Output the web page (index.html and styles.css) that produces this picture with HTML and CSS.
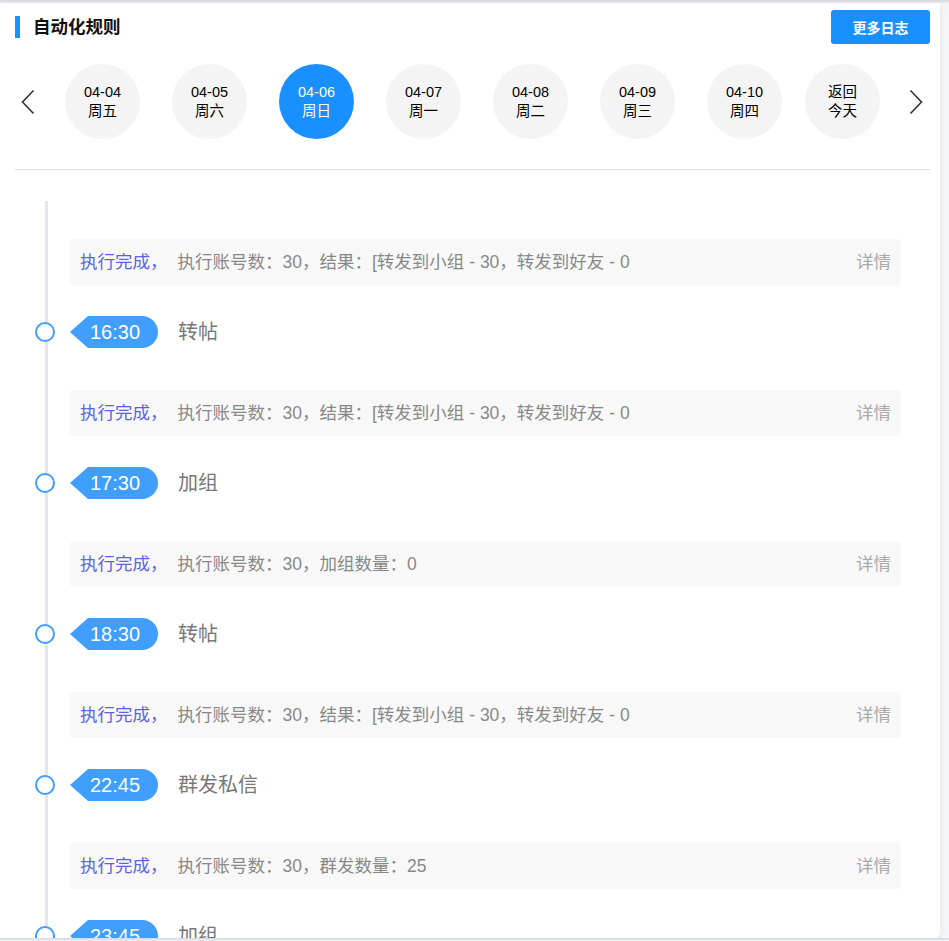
FILE: index.html
```html
<!DOCTYPE html>
<html lang="zh">
<head>
<meta charset="UTF-8">
<meta name="viewport" content="width=device-width, initial-scale=1.0">
<title>自动化规则</title>
<link rel="stylesheet" href="styles.css">
</head>
<body>
    <div class="panel">
        <div class="panel-header">
            <h2 class="panel-title">自动化规则</h2>
            <button type="button" class="btn-log">更多日志</button>
        </div>

        <div class="date-nav">
            <span class="arrow arrow-left">
                <svg width="14" height="26" viewBox="0 0 14 26"><path d="M12.5 1.5 L1.5 13 L12.5 24.5" fill="none" stroke="#333" stroke-width="1.6"/></svg>
            </span>
            <div class="days">
                <div class="day"><span>04-04</span><span>周五</span></div>
                <div class="day"><span>04-05</span><span>周六</span></div>
                <div class="day active"><span>04-06</span><span>周日</span></div>
                <div class="day"><span>04-07</span><span>周一</span></div>
                <div class="day"><span>04-08</span><span>周二</span></div>
                <div class="day"><span>04-09</span><span>周三</span></div>
                <div class="day"><span>04-10</span><span>周四</span></div>
            </div>
            <div class="day today"><span>返回</span><span>今天</span></div>
            <span class="arrow arrow-right">
                <svg width="14" height="26" viewBox="0 0 14 26"><path d="M1.5 1.5 L12.5 13 L1.5 24.5" fill="none" stroke="#333" stroke-width="1.6"/></svg>
            </span>
        </div>

        <div class="timeline">
            <div class="log">
                <span class="log-status">执行完成，</span>
                <span class="log-text">执行账号数：30，结果：[转发到小组 - 30，转发到好友 - 0</span>
                <a class="log-more">详情</a>
            </div>
            <div class="node">
                <span class="dot"></span>
                <span class="time">16:30</span>
                <span class="task">转帖</span>
            </div>

            <div class="log">
                <span class="log-status">执行完成，</span>
                <span class="log-text">执行账号数：30，结果：[转发到小组 - 30，转发到好友 - 0</span>
                <a class="log-more">详情</a>
            </div>
            <div class="node">
                <span class="dot"></span>
                <span class="time">17:30</span>
                <span class="task">加组</span>
            </div>

            <div class="log">
                <span class="log-status">执行完成，</span>
                <span class="log-text">执行账号数：30，加组数量：0</span>
                <a class="log-more">详情</a>
            </div>
            <div class="node">
                <span class="dot"></span>
                <span class="time">18:30</span>
                <span class="task">转帖</span>
            </div>

            <div class="log">
                <span class="log-status">执行完成，</span>
                <span class="log-text">执行账号数：30，结果：[转发到小组 - 30，转发到好友 - 0</span>
                <a class="log-more">详情</a>
            </div>
            <div class="node">
                <span class="dot"></span>
                <span class="time">22:45</span>
                <span class="task">群发私信</span>
            </div>

            <div class="log">
                <span class="log-status">执行完成，</span>
                <span class="log-text">执行账号数：30，群发数量：25</span>
                <a class="log-more">详情</a>
            </div>
            <div class="node last">
                <span class="dot"></span>
                <span class="time">23:45</span>
                <span class="task">加组</span>
            </div>
        </div>
    </div>
</body>
</html>
```

FILE: styles.css
```css
body {
  font-family: "Liberation Sans", "Noto Sans CJK SC", sans-serif;
  margin: 0;
  padding: 3px 0 0;
  background: linear-gradient(#d6dae0, #eceef2 3px, #f4f5f7 3px);
  overflow: hidden;
}
.panel {
  width: 940px;
  height: 935px;
  box-sizing: border-box;
  padding: 7px 10px 0 15px;
  background-color: #fff;
  border-radius: 0 0 6px 0;
  box-shadow: 1px 1px 6px rgba(0, 0, 0, 0.06);
  overflow: hidden;
}
.panel-header {
  display: flex;
  justify-content: space-between;
  align-items: center;
  height: 34px;
}
.panel-title {
  margin: 0;
  padding-left: 13px;
  border-left: 5px solid #1890ff;
  font-size: 17.5px;
  line-height: 22px;
  font-weight: bold;
  color: #111;
}
.btn-log {
  width: 99px;
  height: 34px;
  border: none;
  border-radius: 3px;
  background-color: #1890ff;
  color: #fff;
  font-family: inherit;
  font-size: 14px;
  font-weight: 600;
  cursor: pointer;
}
.date-nav {
  display: flex;
  align-items: center;
  margin-top: 20px;
  height: 75px;
}
.arrow {
  display: flex;
  align-items: center;
}
.arrow-left {
  margin-left: 6px;
}
.days {
  display: flex;
  gap: 32px;
  margin-left: 30px;
}
.day {
  display: flex;
  flex-direction: column;
  align-items: center;
  justify-content: center;
  width: 75px;
  height: 75px;
  border-radius: 50%;
  background-color: #f4f4f4;
  color: #000;
  font-size: 14.5px;
  line-height: 19px;
  cursor: pointer;
}
.day.active {
  background-color: #1890ff;
  color: #fff;
}
.day.today {
  margin-left: 23px;
}
.arrow-right {
  margin-left: 29px;
}
.timeline {
  position: relative;
  margin-top: 30px;
  border-top: 1px solid #ddd;
  padding: 69px 29px 0 55px;
}
.timeline::before {
  content: "";
  position: absolute;
  left: 30px;
  top: 31px;
  bottom: 0;
  width: 3px;
  background-color: #e4e6ec;
}
.log {
  display: flex;
  align-items: center;
  height: 46px;
  box-sizing: border-box;
  padding: 0 10px 3px;
  border-radius: 4px;
  background-color: #f8f8f8;
  font-size: 17.5px;
  color: #888;
}
.log-status {
  color: #5a63e6;
  margin-right: 10px;
}
.log-text {
  flex: 1;
}
.log-more {
  color: #aaa;
  cursor: pointer;
}
.node {
  position: relative;
  display: flex;
  align-items: center;
  height: 32px;
  margin: 31px 0 42px;
}
.node.last {
  margin-bottom: 0;
}
.dot {
  position: absolute;
  left: -35px;
  top: 6px;
  width: 20px;
  height: 20px;
  box-sizing: border-box;
  border: 2px solid #409eff;
  border-radius: 50%;
  background-color: #fff;
}
.time {
  position: relative;
  margin-left: 18px;
  height: 32px;
  padding: 0 18px 0 2px;
  border-radius: 0 16px 16px 0;
  background-color: #409eff;
  color: #fff;
  font-size: 20px;
  line-height: 32px;
}
.time::before {
  content: "";
  position: absolute;
  left: -18px;
  top: 0;
  border-top: 16px solid transparent;
  border-bottom: 16px solid transparent;
  border-right: 18px solid #409eff;
}
.task {
  margin-left: 20px;
  padding-bottom: 3px;
  font-size: 20px;
  color: #777;
}
```
